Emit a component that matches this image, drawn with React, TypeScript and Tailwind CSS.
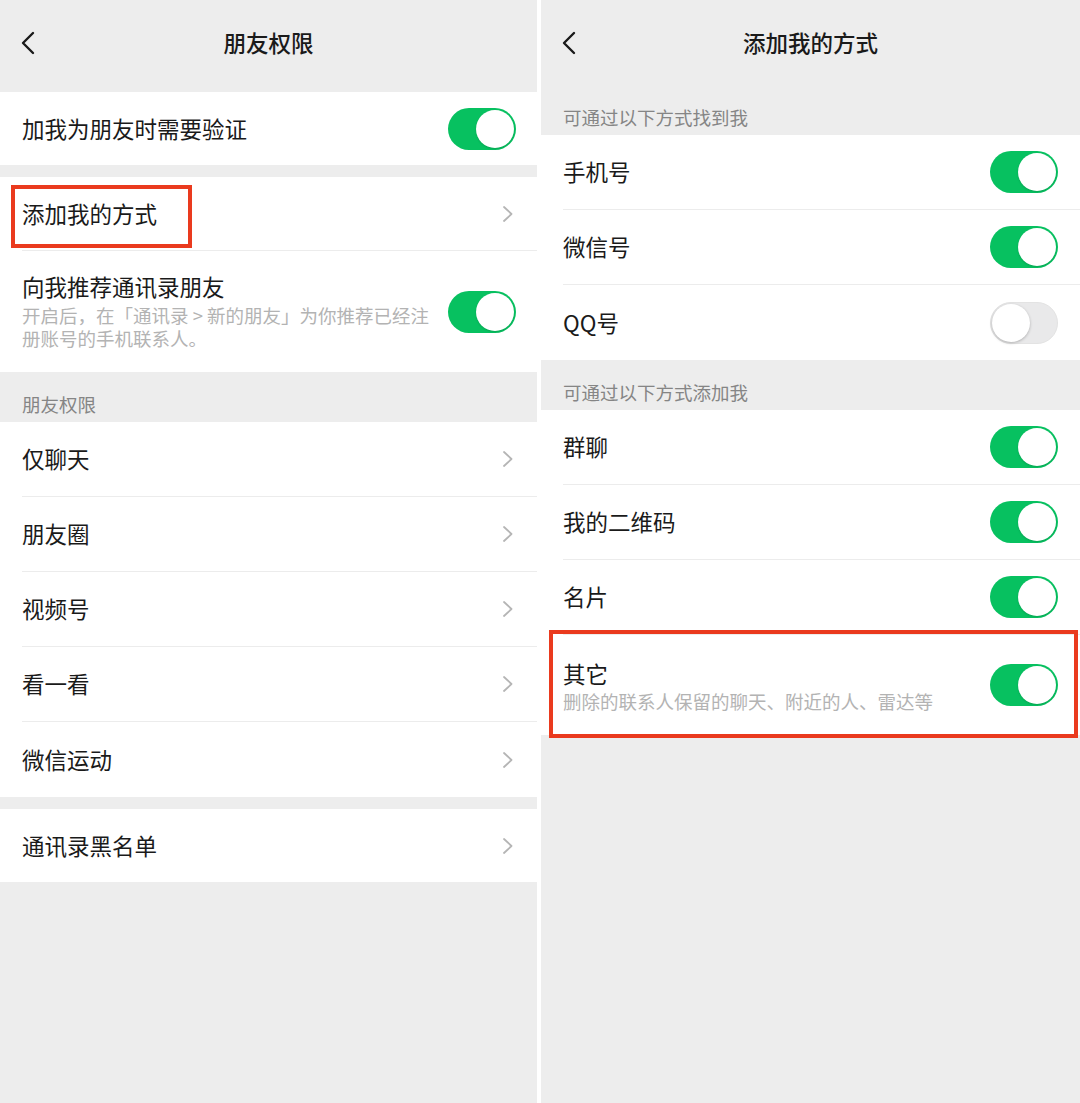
import React from "react";

const FONT = { fontFamily: '"Noto Sans CJK SC", "Noto Sans", sans-serif' };

function Toggle({ on = true }: { on?: boolean }) {
  return on ? (
    <div className="w-[68px] h-[42px] rounded-full bg-[#07c160] relative shrink-0">
      <div className="absolute right-[2px] top-[2px] w-[38px] h-[38px] rounded-full bg-white shadow-[0_1px_2px_rgba(0,0,0,0.15)]" />
    </div>
  ) : (
    <div className="w-[68px] h-[42px] rounded-full bg-[#e9e9ea] relative shrink-0 border border-[#e3e3e3]">
      <div className="absolute left-[1px] top-[1px] w-[38px] h-[38px] rounded-full bg-white shadow-[0_1px_3px_rgba(0,0,0,0.25)]" />
    </div>
  );
}

function Chevron() {
  return (
    <svg width="12" height="18" viewBox="0 0 12 18" className="shrink-0">
      <path d="M2 2 L9.5 9 L2 16" fill="none" stroke="#b5b5b5" strokeWidth="1.8" strokeLinecap="round" strokeLinejoin="round" />
    </svg>
  );
}

function Back() {
  return (
    <svg width="16" height="24" viewBox="0 0 16 24">
      <path d="M13 2 L3 12 L13 22" fill="none" stroke="#1a1a1a" strokeWidth="2.4" strokeLinecap="round" strokeLinejoin="round" />
    </svg>
  );
}

function Row({
  label,
  right,
  sep = true,
  pr = "pr-[23px]",
}: {
  label: string;
  right: React.ReactNode;
  sep?: boolean;
  pr?: string;
}) {
  return (
    <div className="relative bg-white pl-[22px]">
      <div className={`h-[75px] flex items-center justify-between ${pr} ${sep ? "border-b border-[#ececec]" : ""}`}>
        <span className="text-[22.5px] text-[#1a1a1a]">{label}</span>
        {right}
      </div>
    </div>
  );
}

function SectionHeader({ text, h = "h-[50px]" }: { text: string; h?: string }) {
  return (
    <div className={`${h} flex items-end pl-[22px] pb-[3px]`}>
      <span className="text-[18.5px] text-[#858585]">{text}</span>
    </div>
  );
}

function Header({ title }: { title: string }) {
  return (
    <div className="h-[92px] relative flex items-center justify-center">
      <div className="absolute left-[20px] top-[31px]">
        <Back />
      </div>
      <span className="text-[22.5px] font-medium text-[#1a1a1a] -mt-[6px]">{title}</span>
    </div>
  );
}

export default function App() {
  return (
    <div className="w-[1080px] h-[1103px] bg-white flex" style={FONT}>
      {/* Left panel */}
      <div className="w-[537px] h-full bg-[#ededed] flex flex-col">
        <Header title="朋友权限" />
        <div className="bg-white h-[73px] pl-[22px] pr-[21px] flex items-center justify-between">
          <span className="text-[22.5px] text-[#1a1a1a]">加我为朋友时需要验证</span>
          <Toggle />
        </div>
        <div className="h-[12px]" />
        <div className="relative bg-white pl-[22px]">
          <div className="h-[74px] flex items-center justify-between pr-[23px] border-b border-[#ececec]">
            <span className="text-[22.5px] text-[#1a1a1a]">添加我的方式</span>
            <Chevron />
          </div>
          <div className="absolute left-[11px] top-[8px] w-[181px] h-[63px] border-[4px] border-[#ea3a1e]" />
        </div>
        <div className="bg-white h-[121px] pl-[22px] pr-[21px] flex items-center justify-between">
          <div className="flex flex-col -mt-[2px]">
            <span className="text-[22.5px] text-[#1a1a1a] leading-[30px]">向我推荐通讯录朋友</span>
            <span className="text-[18.5px] text-[#b3b3b3] leading-[23px] w-[410px] mt-[3px]">
              开启后，在「通讯录 &gt; 新的朋友」为你推荐已经注册账号的手机联系人。
            </span>
          </div>
          <Toggle />
        </div>
        <SectionHeader text="朋友权限" />
        <Row label="仅聊天" right={<Chevron />} />
        <Row label="朋友圈" right={<Chevron />} />
        <Row label="视频号" right={<Chevron />} />
        <Row label="看一看" right={<Chevron />} />
        <Row label="微信运动" right={<Chevron />} sep={false} />
        <div className="h-[12px]" />
        <div className="bg-white h-[73px] pl-[22px] pr-[23px] flex items-center justify-between">
          <span className="text-[22.5px] text-[#1a1a1a]">通讯录黑名单</span>
          <Chevron />
        </div>
      </div>

      <div className="w-[4px] h-full bg-white" />

      {/* Right panel */}
      <div className="flex-1 h-full bg-[#ededed] flex flex-col">
        <div className="h-[85px] relative flex items-start justify-center">
          <div className="absolute left-[20px] top-[31px]">
            <Back />
          </div>
          <span className="text-[22.5px] font-medium text-[#1a1a1a] mt-[26px]">添加我的方式</span>
        </div>
        <SectionHeader text="可通过以下方式找到我" />
        <Row label="手机号" right={<Toggle />} pr="pr-[22px]" />
        <Row label="微信号" right={<Toggle />} pr="pr-[22px]" />
        <Row label="QQ号" right={<Toggle on={false} />} pr="pr-[22px]" sep={false} />
        <SectionHeader text="可通过以下方式添加我" />
        <Row label="群聊" right={<Toggle />} pr="pr-[22px]" />
        <Row label="我的二维码" right={<Toggle />} pr="pr-[22px]" />
        <Row label="名片" right={<Toggle />} pr="pr-[22px]" />
        <div className="relative bg-white h-[100px] pl-[22px] pr-[22px] flex items-center justify-between">
          <div className="flex flex-col">
            <span className="text-[22.5px] text-[#1a1a1a] leading-[30px]">其它</span>
            <span className="text-[18.5px] text-[#b3b3b3] leading-[24px] mt-[1px]">删除的联系人保留的聊天、附近的人、雷达等</span>
          </div>
          <Toggle />
          <div className="absolute left-[8px] top-[-5px] w-[529px] h-[108px] border-[4px] border-[#ea3a1e]" />
        </div>
      </div>
    </div>
  );
}
